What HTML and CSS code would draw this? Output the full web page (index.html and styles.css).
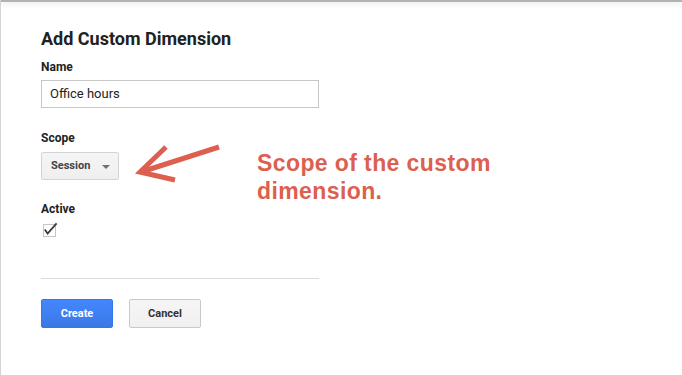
FILE: index.html
```html
<!DOCTYPE html>
<html lang="en">

<head>
    <meta charset="UTF-8">
    <meta name="viewport" content="width=device-width, initial-scale=1.0">
    <title>Add Custom Dimension</title>
    <link rel="stylesheet" href="styles.css">
</head>

<body>

    <div class="topbar"></div>

    <main class="dialog">
        <h1 class="dialog-title">Add Custom Dimension</h1>

        <div class="field-label">Name</div>
        <div class="text-input">Office hours</div>

        <div class="field-label spaced">Scope</div>
        <div class="select-btn">
            <span>Session</span>
            <span class="caret"></span>
        </div>

        <div class="field-label spaced-small">Active</div>
        <div class="checkbox">
            <svg width="13" height="13" viewBox="0 0 13 13">
                <path d="M1.8 5.6 L4.6 9.6 L13.6 -0.6" fill="none" stroke="#3a3a3a" stroke-width="1.8" />
            </svg>
        </div>

        <hr class="divider">

        <div class="actions">
            <button class="btn btn-primary">Create</button>
            <button class="btn btn-default">Cancel</button>
        </div>
    </main>

    <!-- Annotation par-dessus la capture -->
    <svg class="note-arrow" width="100" height="55" viewBox="0 0 100 55">
        <path d="M88 12 L10 37" fill="none" stroke="#dc5f50" stroke-width="5" />
        <path d="M35 12 L9 37 L44 45" fill="none" stroke="#dc5f50" stroke-width="5" stroke-linejoin="miter" />
    </svg>
    <div class="note-text">Scope of the custom<br>dimension.</div>

</body>

</html>
```

FILE: styles.css
```css
* {
    box-sizing: border-box;
}

body {
    position: relative;
    margin: 0;
    width: 682px;
    height: 375px;
    overflow: hidden;
    background: #fff;
    border-left: 1px solid #d4d4d4;
    font-family: Roboto, "Liberation Sans", sans-serif;
    color: #222;
}

/* Barre du haut */
.topbar {
    position: absolute;
    top: 0;
    left: 0;
    right: 0;
    height: 2px;
    background: #b3b3b3;
    box-shadow: 0 1px 6px rgba(0, 0, 0, 0.18);
}

/* Formulaire */
.dialog {
    display: flex;
    flex-direction: column;
    align-items: flex-start;
    width: 318px;
    padding: 27px 0 0 40px;
}

.dialog-title {
    margin: 0 0 8px;
    font-size: 18px;
    line-height: 24px;
    font-weight: 700;
    color: #212121;
}

.field-label {
    font-size: 12px;
    line-height: 16px;
    font-weight: 700;
    color: #222;
    margin-bottom: 5px;
}

.field-label.spaced {
    margin-top: 22px;
    margin-bottom: 6px;
}

.field-label.spaced-small {
    margin-top: 21px;
    margin-bottom: 7px;
}

.text-input {
    width: 278px;
    height: 28px;
    border: 1px solid #c8c8c8;
    padding: 0 8px;
    font-size: 13px;
    line-height: 26px;
    color: #222;
}

.select-btn {
    display: flex;
    align-items: center;
    justify-content: space-between;
    width: 78px;
    height: 28px;
    padding: 0 8px 1px 9px;
    border: 1px solid #d3d3d3;
    border-radius: 2px;
    background: linear-gradient(#f5f5f5, #efefef);
    font-size: 11px;
    font-weight: 700;
    color: #444;
}

.caret {
    width: 0;
    height: 0;
    border-left: 4px solid transparent;
    border-right: 4px solid transparent;
    border-top: 4px solid #707070;
    margin-top: 3px;
}

.checkbox {
    width: 13px;
    height: 13px;
    margin-left: 2px;
    border: 1px solid #c6c6c6;
    display: flex;
}

.checkbox svg {
    margin: -1px 0 0 -1px;
    overflow: visible;
}

.divider {
    width: 278px;
    margin: 41px 0 0;
    border: 0;
    border-top: 1px solid #dcdcdc;
}

.actions {
    display: flex;
    gap: 16px;
    margin-top: 20px;
}

.btn {
    width: 72px;
    height: 29px;
    border-radius: 2px;
    font-family: Roboto, "Liberation Sans", sans-serif;
    font-size: 11px;
    font-weight: 700;
    padding: 0;
}

.btn-primary {
    background: linear-gradient(#4387fd, #3b78e7);
    border: 1px solid #3079ed;
    color: #fff;
}

.btn-default {
    background: linear-gradient(#f5f5f5, #f0f0f0);
    border: 1px solid #c9c9c9;
    color: #333;
}

/* Annotation */
.note-arrow {
    position: absolute;
    left: 130px;
    top: 135px;
}

.note-text {
    position: absolute;
    left: 256px;
    top: 149px;
    font-family: "Liberation Sans", Arial, sans-serif;
    font-size: 23px;
    line-height: 28px;
    letter-spacing: 0.4px;
    font-weight: 700;
    color: #dc5f50;
}
```
